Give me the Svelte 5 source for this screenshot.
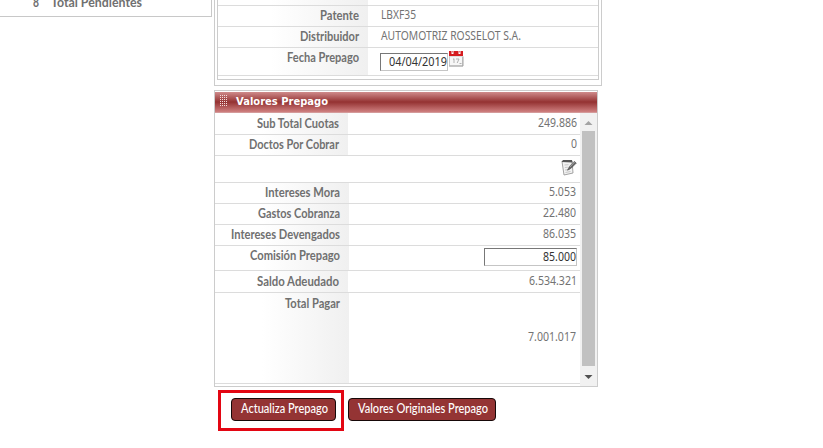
<script>
  // h: row height with its rule; w/vw: text widths; b/vb: baselines within the row
  const vehicle = [
    { label: 'Patente', w: 39, value: 'LBXF35', vw: 35, h: 21, b: 14, vb: 13 },
    { label: 'Distribuidor', w: 59, value: 'AUTOMOTRIZ ROSSELOT S.A.', vw: 140, h: 21, b: 14, vb: 13 },
    { label: 'Fecha Prepago', w: 72, value: '04/04/2019', vw: 58, h: 28, b: 14, date: true }
  ];
  const amounts = [
    { label: 'Sub Total Cuotas', w: 82, value: '249.886', vw: 39, h: 22, b: 15, vb: 14 },
    { label: 'Doctos Por Cobrar', w: 90, value: '0', vw: 6, h: 21, b: 14, vb: 13 },
    { note: true, h: 27 },
    { label: 'Intereses Mora', w: 75, value: '5.053', vw: 27, h: 21, b: 14, vb: 13, wide: true },
    { label: 'Gastos Cobranza', w: 82, value: '22.480', vw: 33, h: 21, b: 14, vb: 13, wide: true },
    { label: 'Intereses Devengados', w: 109, value: '86.035', vw: 33, h: 21, b: 14, vb: 13, wide: true },
    { label: 'Comisión Prepago', w: 90, value: '85.000', vw: 33, h: 25, b: 14, input: true, wide: true },
    { label: 'Saldo Adeudado', w: 82, value: '6.534.321', vw: 48, h: 22, b: 15, vb: 14 },
    { label: 'Total Pagar', w: 55, value: '7.001.017', vw: 48, h: 91, b: 15, vb: 48, wide: true }
  ];
</script>

{#snippet line(text, width, kind, base)}
  <svg class="text {kind}" width={width} height="18" style:margin-top="{base - 12}px">
    <text x="0" y="12" textLength={width} lengthAdjust="spacingAndGlyphs">{text}</text>
  </svg>
{/snippet}

<main>
  <div class="top">
    <section class="pending">
      {@render line('8', 6, 'bold', 7)}
      {@render line('Total Pendientes', 91, 'bold', 7)}
    </section>
    <section class="outer">
      <div class="inner">
        <div class="stub"><div class="label"></div></div>
        {#each vehicle as row}
          <div class="row" style:height="{row.h}px">
            <div class="label">{@render line(row.label, row.w, 'bold', row.b)}</div>
            <div class="info" class:plain={!row.date}>
              {#if row.date}
                <div class="field date">{@render line(row.value, row.vw, 'dark', 12)}</div>
                <svg class="calendar" width="15" height="16" viewBox="0 0 15 16">
                  <path d="M.5 5h13.5v10H.5z" fill="#f7f7f7" stroke="#c9c9c9" />
                  <path d="M0 15h14M13.8 6v9" stroke="#a5a5a5" />
                  <path d="M0 0h14v5H0z" fill="#d51c20" />
                  <path d="M3.5 0v3M10.5 0v3" stroke="#fff" stroke-width="2" />
                  <path d="M3.5 0v1.5M10.5 0v1.5" stroke="#d77" />
                  <path d="M4 8.5l1-.8V12M7 8h3l-1.8 4M10.5 12.5h2" fill="none" stroke="#aaa" stroke-width=".9" />
                </svg>
              {:else}
                {@render line(row.value, row.vw, 'value', row.vb)}
              {/if}
            </div>
          </div>
        {/each}
      </div>
    </section>
  </div>

  <section class="panel">
    <header>
      <svg width="9" height="12" viewBox="0 0 9 12">
        <path d="M.5 0v12M2.5 0v12M4.5 0v12M6.5 0v12" stroke="#f4dede" stroke-dasharray="1 1" />
      </svg>
      {@render line('Valores Prepago', 92, 'title', 10)}
    </header>
    <div class="body">
      <div class="list">
        {#each amounts as row}
          <div class="row" style:height="{row.h}px">
            {#if row.note}
              <svg class="note" width="16" height="17" viewBox="0 0 16 17">
                <path d="M1 2.5L11 2l1 12-9 2z" fill="#f3f3f3" stroke="#999" stroke-width=".9" />
                <path d="M.5 3L2 1l9-.1.5 2.5z" fill="#555" />
                <path d="M3.5 6l4-.3M3.8 8.5l3-.3M4 11l5-.5M4.5 13.5l5-1" stroke="#c5c5c5" />
                <path d="M6.5 11.2l2-3.8 4.8-5 2 1.7-5 5z" fill="#666" stroke="#444" stroke-width=".6" />
                <path d="M8.8 8l4.8-5" stroke="#bbb" stroke-width=".8" />
              </svg>
            {:else}
              <div class="label" class:wide={row.wide}>{@render line(row.label, row.w, 'bold', row.b)}</div>
              <div class="amount" class:near={row.wide && !row.input}>
                {#if row.input}
                  <div class="field money">{@render line(row.value, row.vw, 'dark', 12)}</div>
                {:else}
                  {@render line(row.value, row.vw, 'value', row.vb)}
                {/if}
              </div>
            {/if}
          </div>
        {/each}
      </div>
      <div class="scroll">
        <svg width="17" height="18"><path d="M4.5 12h8l-4-4z" fill="#a3a3a3" /></svg>
        <div class="thumb"></div>
        <svg width="17" height="20"><path d="M4.5 9h8l-4 4z" fill="#505050" /></svg>
      </div>
    </div>
  </section>

  <footer>
    <div class="mark">
      <button class="first">{@render line('Actualiza Prepago', 87, 'light', 14)}</button>
    </div>
    <button class="second">{@render line('Valores Originales Prepago', 130, 'light', 14)}</button>
  </footer>
</main>

<style>
  :global(body) { margin: 0; background: #fff; }
  main { width: 823px; height: 448px; overflow: hidden; }
  div, section, header, button { box-sizing: border-box; }
  svg { display: block; flex: none; }
  .text { overflow: visible; font-family: "Noto Sans", sans-serif; font-size: 12px; fill: #737373; }
  .bold { font-family: Lato, sans-serif; font-weight: 700; font-size: 12.5px; fill: #707070; }
  .dark { fill: #333; }
  .title { font-family: "DejaVu Sans", sans-serif; font-weight: 700; font-size: 11px; fill: #fff; }
  .light { font-family: Lato, sans-serif; font-weight: 500; font-size: 12.5px; fill: #fff; }

  .top { display: flex; height: 90px; }
  .pending { display: flex; gap: 12px; width: 212px; height: 17px; padding-left: 33px; border: solid #c8c8c8; border-width: 0 1px 1px 0; }
  .outer { width: 388px; height: 86px; margin-left: 2px; padding: 0 2px; border: solid #ccc; border-width: 0 1px 1px; }
  .inner { height: 80px; border: solid #ccc; border-width: 0 1px 1px; }
  .stub { height: 6px; border-bottom: 1px solid #dcdcdc; }
  .stub .label { width: 150px; }
  .row { display: flex; border-bottom: 1px solid #dcdcdc; }
  .label { display: flex; justify-content: flex-end; flex: none; height: 100%; background: linear-gradient(90deg, #fff 35%, #f0f0f0); }
  .inner .label { width: 150px; padding-right: 9px; }
  .info { display: flex; padding-left: 12px; }
  .info.plain { padding-left: 13px; }
  .field { display: flex; justify-content: flex-end; height: 18px; background: #fff; border: 1px solid #c5c5c5; border-top-color: #777; border-left-color: #777; }
  .date { width: 68px; margin-top: 5px; }
  .calendar { margin: 3px 0 0 1px; }

  .panel { width: 384px; height: 297px; margin-left: 214px; border: 1px solid #ccc; }
  header { display: flex; height: 22px; padding: 3px 0 0 5px; border-top: 1px solid #fff; border-bottom: 1px solid #d49a9a; background: linear-gradient(#cf8b8b, #943232 50%, #cf8080); }
  header .title { margin-left: 7px; }
  .body { display: flex; height: 273px; }
  .list { width: 365px; }
  .panel .label { width: 133px; padding-right: 9px; }
  .panel .label.wide { width: 134px; }
  .amount { display: flex; flex: 1; justify-content: flex-end; padding-right: 3px; }
  .amount.near { padding-right: 4px; }
  .money { width: 93px; margin-top: 2px; }
  .note { margin: 3px 3px 0 auto; }
  .scroll { width: 17px; background: #f1f1f1; }
  .thumb { width: 13px; height: 235px; margin-left: 2px; background: #c1c1c1; }

  footer { display: flex; gap: 4px; margin: 3px 0 0 218px; }
  .mark { display: flex; width: 126px; height: 41px; padding: 5px 0 0 10px; border: 3px solid #e30613; }
  button { display: flex; justify-content: center; align-items: flex-start; height: 23px; padding: 0 0 0 1px; border: 1px solid #160808; border-radius: 4px; background: #943434; }
  .first { width: 105px; }
  .second { width: 148px; margin-top: 8px; }
</style>
